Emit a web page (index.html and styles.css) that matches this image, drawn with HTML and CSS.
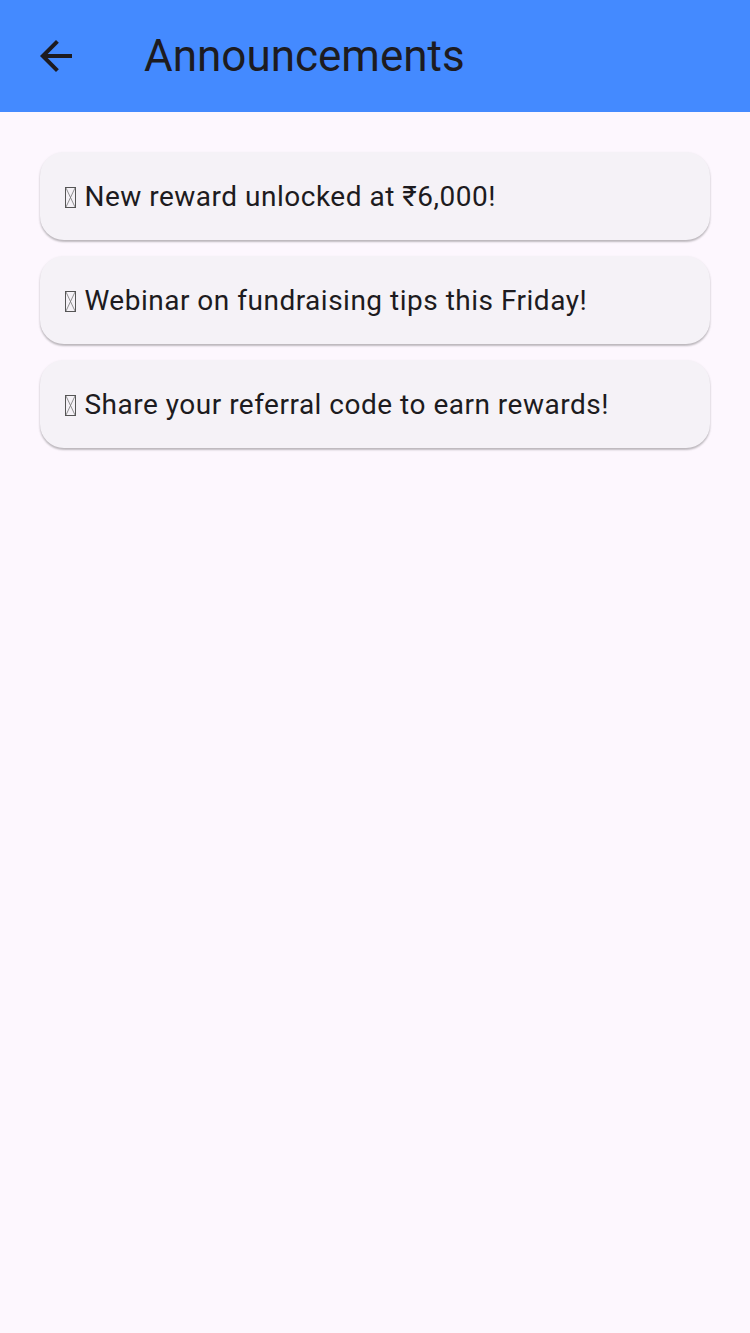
FILE: index.html
```html
<!DOCTYPE html>
<html lang="en">
<head>
<meta charset="utf-8">
<title>Announcements</title>
<link rel="stylesheet" href="styles.css">
</head>
<body>
<header class="appbar">
  <button class="back" aria-label="Back">
    <svg width="48" height="48" viewBox="0 0 24 24"><path d="M20 11H7.83l5.59-5.59L12 4l-8 8 8 8 1.41-1.41L7.83 13H20v-2z" fill="#1d1b20"/></svg>
  </button>
  <h1 class="title">Announcements</h1>
</header>
<main class="list">
  <div class="card"><span class="tofu"><svg width="11" height="21" viewBox="0 0 11 21"><rect x="0.5" y="0.5" width="10" height="20" fill="none" stroke="#555" stroke-width="1"/><path d="M1 1L10 20M10 1L1 20" stroke="#777" stroke-width="0.8"/></svg></span> New reward unlocked at ₹6,000!</div>
  <div class="card"><span class="tofu"><svg width="11" height="21" viewBox="0 0 11 21"><rect x="0.5" y="0.5" width="10" height="20" fill="none" stroke="#555" stroke-width="1"/><path d="M1 1L10 20M10 1L1 20" stroke="#777" stroke-width="0.8"/></svg></span> Webinar on fundraising tips this Friday!</div>
  <div class="card"><span class="tofu"><svg width="11" height="21" viewBox="0 0 11 21"><rect x="0.5" y="0.5" width="10" height="20" fill="none" stroke="#555" stroke-width="1"/><path d="M1 1L10 20M10 1L1 20" stroke="#777" stroke-width="0.8"/></svg></span> Share your referral code to earn rewards!</div>
</main>
</body>
</html>
```
FILE: styles.css
```css
html, body {
  margin: 0;
  padding: 0;
}
body {
  background: #fdf7fe;
  font-family: Roboto, "Liberation Sans", sans-serif;
  color: #1d1b20;
  min-height: 1333px;
}
.appbar {
  height: 112px;
  background: #448aff;
  display: flex;
  align-items: center;
}
.back {
  width: 112px;
  height: 112px;
  border: 0;
  background: none;
  padding: 0;
  display: flex;
  align-items: center;
  justify-content: center;
}
.back svg { display: block; }
.title {
  margin: 0 0 0 32px;
  font-size: 44px;
  font-weight: 400;
  color: #1d1b20;
  line-height: 1;
}
.list {
  padding: 40px 40px;
  display: flex;
  flex-direction: column;
  gap: 16px;
}
.card {
  height: 88px;
  box-sizing: border-box;
  background: #f5f2f7;
  border-radius: 24px;
  box-shadow: 0 2px 2px rgba(0,0,0,0.22), 0 1px 3px rgba(0,0,0,0.08);
  display: flex;
  align-items: center;
  padding: 0 24px 0 25px;
  font-size: 28px;
  letter-spacing: 0.5px;
  white-space: pre;
  color: #1d1b20;
}
.tofu {
  display: inline-flex;
  align-items: center;
  margin-top: 2px;
  margin-right: 1px;
}
.tofu svg { display: block; }
```
